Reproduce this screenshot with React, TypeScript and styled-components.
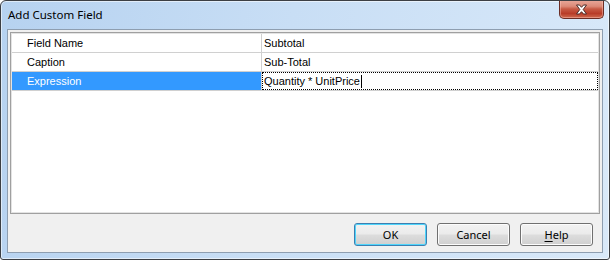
import styled, { createGlobalStyle, css } from "styled-components";

const GlobalStyle = createGlobalStyle`
  html, body {
    margin: 0;
    padding: 0;
    background: #ffffff;
  }
`;

const fields = [
  { name: "Field Name", value: "Subtotal" },
  { name: "Caption", value: "Sub-Total" },
  { name: "Expression", value: "Quantity * UnitPrice", selected: true },
];

export default function App() {
  return (
    <>
      <GlobalStyle />
      <Window>
        <TitleBar>
          <Title>Add Custom Field</Title>
          <CloseButton>
            <svg width="13" height="11" viewBox="0 0 13 11">
              <path
                d="M1.5 1 H4.5 L6.5 3.3 L8.5 1 H11.5 L8.2 5.5 L11.5 10 H8.5 L6.5 7.7 L4.5 10 H1.5 L4.8 5.5 Z"
                fill="#ffffff"
                stroke="#4a2a26"
                strokeWidth="1"
                strokeLinejoin="round"
              />
            </svg>
          </CloseButton>
        </TitleBar>
        <Client>
          <Grid>
            {fields.map((f) => (
              <Row key={f.name}>
                <NameCell $selected={f.selected}>{f.name}</NameCell>
                <ValueCell $focused={f.selected}>
                  {f.value}
                  {f.selected && <Caret />}
                </ValueCell>
              </Row>
            ))}
          </Grid>
          <ButtonBar>
            <Button $default>OK</Button>
            <Button>Cancel</Button>
            <Button>
              <u>H</u>elp
            </Button>
          </ButtonBar>
        </Client>
      </Window>
    </>
  );
}

const Window = styled.div`
  width: 610px;
  height: 260px;
  box-sizing: border-box;
  border: 1px solid #3c3f44;
  border-radius: 6px 6px 3px 3px;
  background: linear-gradient(100deg, #b6d2f0 0%, #c8def5 45%, #d9e9f9 100%);
  box-shadow: inset 0 0 0 1px rgba(255, 255, 255, 0.55);
  display: flex;
  flex-direction: column;
  padding: 0 6px 6px 6px;
  overflow: hidden;
`;

const TitleBar = styled.div`
  height: 28px;
  display: flex;
  align-items: flex-start;
  justify-content: space-between;
  flex-shrink: 0;
`;

const Title = styled.div`
  font-family: "Noto Sans", "Liberation Sans", sans-serif;
  font-size: 11.5px;
  color: #000000;
  padding: 6px 0 0 1px;
  line-height: 16px;
`;

const CloseButton = styled.div`
  width: 45px;
  height: 19px;
  margin-top: -1px;
  margin-right: -1px;
  box-sizing: border-box;
  border: 1px solid #6b2d25;
  border-top: none;
  border-radius: 0 0 5px 5px;
  background: linear-gradient(
    180deg,
    #e9a99b 0%,
    #dc8a78 35%,
    #c75a44 50%,
    #b83c28 75%,
    #cf6a4e 100%
  );
  box-shadow: inset 0 0 0 1px rgba(255, 200, 190, 0.45);
  display: flex;
  align-items: center;
  justify-content: center;
`;

const Client = styled.div`
  flex: 1;
  border: 1px solid #8e9eb0;
  background: #f0f0f0;
  display: flex;
  flex-direction: column;
  padding: 2px 2px 6px 2px;
`;

const Grid = styled.div`
  height: 182px;
  box-sizing: border-box;
  background: #ffffff;
  border: 1px solid #a0a0a0;
  box-shadow: inset 0 0 0 1px #e3e3e3;
  padding: 1px;
  display: flex;
  flex-direction: column;
`;

const Row = styled.div`
  display: grid;
  grid-template-columns: 250px 1fr;
  height: 19px;
  box-sizing: border-box;
  border-bottom: 1px solid #d0d0d0;
`;

const cellText = css`
  font-family: "Liberation Sans", Arial, sans-serif;
  font-size: 11px;
  line-height: 18px;
  white-space: nowrap;
  overflow: hidden;
`;

const NameCell = styled.div<{ $selected?: boolean }>`
  ${cellText};
  padding-left: 15px;
  border-right: 1px solid #d0d0d0;
  background: ${(p) => (p.$selected ? "#3399ff" : "transparent")};
  color: ${(p) => (p.$selected ? "#ffffff" : "#000000")};
`;

const ValueCell = styled.div<{ $focused?: boolean }>`
  ${cellText};
  padding-left: 2px;
  box-sizing: border-box;
  color: #000000;
  display: flex;
  align-items: center;
  ${(p) =>
    p.$focused &&
    css`
      outline: 1px dotted #000000;
      outline-offset: -1px;
    `}
`;

const Caret = styled.span`
  display: inline-block;
  width: 1px;
  height: 13px;
  background: #000000;
  margin-left: 1px;
`;

const ButtonBar = styled.div`
  display: flex;
  justify-content: flex-end;
  gap: 10px;
  margin-top: auto;
  padding-right: 7px;
`;

const Button = styled.div<{ $default?: boolean }>`
  width: 73px;
  height: 23px;
  box-sizing: border-box;
  border: 1px solid ${(p) => (p.$default ? "#3c7fb1" : "#707070")};
  border-radius: 3px;
  background: linear-gradient(180deg, #f2f2f2 0%, #ebebeb 48%, #dddddd 52%, #cfcfcf 100%);
  box-shadow: inset 0 0 0 1px ${(p) => (p.$default ? "#4fd5fb" : "#fcfcfc")};
  font-family: "Noto Sans", "Liberation Sans", sans-serif;
  font-size: 11px;
  color: #000000;
  display: flex;
  align-items: center;
  justify-content: center;

  u {
    text-decoration: underline;
    text-underline-offset: 2px;
  }
`;
